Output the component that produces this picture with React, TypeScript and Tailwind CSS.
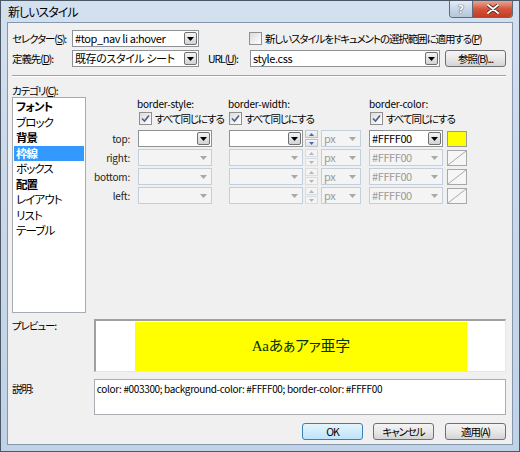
import clsx from 'clsx'

const jp = "font-['Noto_Sans_CJK_JP','Noto_Sans',sans-serif] [font-feature-settings:'palt']"
const t = 'whitespace-nowrap text-[10.5px] tracking-[-1.1px]'
const lat = 'whitespace-nowrap text-[10px] tracking-[-0.2px]'

function Arrow({ disabled }: { disabled?: boolean }) {
  return (
    <svg width="7" height="4" viewBox="0 0 7 4">
      <path d="M0 0h7L3.5 4z" fill={disabled ? '#a8a8a8' : '#000'} />
    </svg>
  )
}

function Combo({
  className,
  value,
  disabled,
}: {
  className: string
  value?: string
  disabled?: boolean
}) {
  return (
    <div
      className={clsx(
        'flex h-[17px] shrink-0 items-center border',
        disabled ? 'border-[#c2cfdf] bg-[#f4f4f4]' : 'border-[#8d9297] bg-white',
        className,
      )}
    >
      <span
        className={clsx(
          'flex-1 truncate pl-[2px] text-[11px] leading-[15px] tracking-[-0.4px]',
          disabled ? 'text-[#9a9a9a]' : 'text-black',
        )}
      >
        {value}
      </span>
      {disabled ? (
        <div className="mr-[1px] flex h-[13px] w-[13px] items-center justify-center">
          <Arrow disabled />
        </div>
      ) : (
        <div className="mr-[1px] flex h-[13px] w-[13px] items-center justify-center rounded-[2px] border border-[#707070] bg-gradient-to-b from-[#f4f4f4] to-[#d3d3d3]">
          <Arrow />
        </div>
      )}
    </div>
  )
}

function Box({ checked }: { checked?: boolean }) {
  return (
    <div className="flex h-[13px] w-[13px] shrink-0 items-center justify-center border border-[#8f8f8f] bg-gradient-to-br from-[#dcdcdc] to-white">
      {checked && (
        <svg width="9" height="9" viewBox="0 0 9 9">
          <path d="M1 4.5 L3.5 7 L8 1.5" stroke="#4a5f8f" strokeWidth="1.6" fill="none" />
        </svg>
      )}
    </div>
  )
}

function Check({ label }: { label: string }) {
  return (
    <div className="flex items-center gap-[3px]">
      <Box checked />
      <span className={clsx(t, 'leading-[13px]')}>{label}</span>
    </div>
  )
}

function Spinner({ disabled }: { disabled?: boolean }) {
  const c = disabled ? '#b4b4b4' : '#4a6bab'
  return (
    <div className="flex h-[17px] w-[13px] shrink-0 flex-col gap-[1px]">
      {[0, 1].map((i) => (
        <div
          key={i}
          className={clsx(
            'flex flex-1 items-center justify-center border',
            disabled
              ? 'border-[#d8dde3] bg-[#f4f4f4]'
              : 'border-[#b9c4d1] bg-gradient-to-b from-[#f6f6f6] to-[#e2e2e2]',
          )}
        >
          <svg width="5" height="3" viewBox="0 0 5 3">
            <path d={i === 0 ? 'M0 3h5L2.5 0z' : 'M0 0h5L2.5 3z'} fill={c} />
          </svg>
        </div>
      ))}
    </div>
  )
}

function Swatch({ filled }: { filled?: boolean }) {
  return filled ? (
    <div className="ml-[4px] h-[16px] w-[20px] shrink-0 border border-[#9a9a9a] bg-[#ffff00]" />
  ) : (
    <div className="ml-[4px] h-[16px] w-[20px] shrink-0 border border-[#a8a8a8] bg-[#f6f6f6]">
      <svg width="18" height="14" viewBox="0 0 18 14" className="block">
        <path d="M0 14 L18 0" stroke="#a8a8a8" strokeWidth="1" />
      </svg>
    </div>
  )
}

function Button({
  label,
  primary,
  className,
}: {
  label: string
  primary?: boolean
  className?: string
}) {
  return (
    <div
      className={clsx(
        'flex h-[17px] w-[61px] shrink-0 items-center justify-center rounded-[3px] border leading-[15px]',
        t,
        primary
          ? 'border-[#3c7fb1] bg-gradient-to-b from-[#e5f4fc] to-[#bde4fa]'
          : 'border-[#707070] bg-gradient-to-b from-[#f4f4f4] via-[#e8e8e8] to-[#d4d4d4]',
        className,
      )}
    >
      {label}
    </div>
  )
}

const CATEGORIES: { name: string; bold?: boolean }[] = [
  { name: 'フォント', bold: true },
  { name: 'ブロック' },
  { name: '背景', bold: true },
  { name: '枠線', bold: true },
  { name: 'ボックス' },
  { name: '配置', bold: true },
  { name: 'レイアウト' },
  { name: 'リスト' },
  { name: 'テーブル' },
]

const SIDES = ['top:', 'right:', 'bottom:', 'left:']

export default function App() {
  return (
    <div
      className={clsx(
        'flex h-[452px] w-[520px] flex-col border border-[#4d5866] bg-gradient-to-b from-[#d3e0ee] via-[#c8d8ea] to-[#c0d2e6] text-black',
        jp,
      )}
    >
      {/* title bar */}
      <div className="flex h-[21px] shrink-0 items-start">
        <span className="ml-[7px] mt-[4px] whitespace-nowrap text-[12px] leading-[14px] tracking-[-1px] text-black">
          新しいスタイル
        </span>
        <div className="ml-auto mr-[6px] flex h-[17px] overflow-hidden rounded-b-[4px] border border-t-0 border-[#5a6a80]">
          <div className="flex w-[23px] items-center justify-center border-r border-[#5a6a80] bg-gradient-to-b from-[#e4ecf5] via-[#c9d7e6] to-[#b4c6da]">
            <span className="font-['DejaVu_Sans',sans-serif] text-[11px] font-bold leading-[13px] text-white [text-shadow:0_0_1px_#445,0_0_1px_#445]">
              ?
            </span>
          </div>
          <div className="flex w-[39px] items-center justify-center bg-gradient-to-b from-[#e8a493] via-[#d5543c] to-[#c43b22]">
            <svg width="12" height="10" viewBox="0 0 12 10">
              <path
                d="M1 1 L11 9 M11 1 L1 9"
                stroke="#3a1b14"
                strokeWidth="3.4"
                strokeLinecap="round"
              />
              <path
                d="M1 1 L11 9 M11 1 L1 9"
                stroke="#fff"
                strokeWidth="2"
                strokeLinecap="round"
              />
            </svg>
          </div>
        </div>
      </div>

      {/* client */}
      <div className="mx-[6px] mb-[6px] flex flex-1 flex-col border border-[#8597ae] bg-[#f0f0f0] pl-[4px] pr-[6px] pt-[7px]">
        <div className="flex h-[17px] items-center">
          <span className={clsx(t, 'w-[60px] leading-[15px]')}>
            セレクター(<u>S</u>):
          </span>
          <Combo className="w-[127px]" value="#top_nav li a:hover" />
          <div className="ml-[50px] flex items-center gap-[3px]">
            <Box />
            <span className={clsx(t, 'leading-[13px]')}>
              新しいスタイルをドキュメントの選択範囲に適用する(<u>P</u>)
            </span>
          </div>
        </div>

        <div className="mt-[3px] flex h-[17px] items-center">
          <span className={clsx(t, 'w-[60px] leading-[15px]')}>
            定義先(<u>D</u>):
          </span>
          <Combo className="w-[127px]" value="既存のスタイル シート" />
          <span className={clsx(t, 'ml-[9px] w-[42px] leading-[15px]')}>
            URL(<u>U</u>):
          </span>
          <Combo className="w-[190px]" value="style.css" />
          <Button className="ml-[5px]" label="参照(B)..." />
        </div>

        <div className="mt-[8px] h-[2px] border-b border-t border-b-white border-t-[#a0a0a0]" />

        <span className={clsx(t, 'mt-[7px] leading-[13px]')}>
          カテゴリ(<u>C</u>):
        </span>

        <div className="flex">
          <div className="h-[216px] w-[74px] shrink-0 border border-[#a5acb5] bg-white px-[1px] pt-[1px]">
            {CATEGORIES.map((c) => (
              <div
                key={c.name}
                className={clsx(
                  'h-[15.5px] pl-[2px] text-[11.5px] leading-[15.5px] tracking-[-0.9px]',
                  c.bold && 'font-bold',
                  c.name === '枠線' && 'bg-[#3399ff] text-white',
                )}
              >
                {c.name}
              </div>
            ))}
          </div>

          <div className="flex flex-col">
            <div className={clsx(lat, 'flex h-[13px] items-center leading-[13px]')}>
              <span className="w-[51px]" />
              <span className="w-[91px]">border-style:</span>
              <span className="w-[141px]">border-width:</span>
              <span>border-color:</span>
            </div>
            <div className="mt-[2px] flex h-[13px] items-center">
              <span className="w-[53px]" />
              <div className="w-[90px]">
                <Check label="すべて同じにする" />
              </div>
              <div className="w-[141px]">
                <Check label="すべて同じにする" />
              </div>
              <Check label="すべて同じにする" />
            </div>

            {SIDES.map((s, i) => {
              const off = i > 0
              return (
                <div
                  key={s}
                  className={clsx('flex h-[17px] items-center', i === 0 ? 'mt-[5px]' : 'mt-[2px]')}
                >
                  <span
                    className={clsx(lat, 'w-[52px] pr-[8px] text-right leading-[15px] text-[#222]')}
                  >
                    {s}
                  </span>
                  <Combo className="w-[74px]" disabled={off} />
                  <Combo className="ml-[17px] w-[74px]" disabled={off} />
                  <div className="ml-[2px]">
                    <Spinner disabled={off} />
                  </div>
                  <Combo className="ml-[3px] w-[40px]" value="px" disabled />
                  <Combo className="ml-[8px] w-[74px]" value="#FFFF00" disabled={off} />
                  <Swatch filled={!off} />
                </div>
              )
            })}
          </div>
        </div>

        <div className="mt-[6px] flex">
          <span className={clsx(t, 'w-[82px] leading-[13px]')}>プレビュー:</span>
          <div className="h-[53px] w-[413px] border-b border-l-2 border-r border-t-2 border-b-[#e6e6e6] border-l-[#a0a0a0] border-r-[#e6e6e6] border-t-[#a0a0a0] bg-white pl-[39px] pt-[1px]">
            <div className="flex h-[49px] w-[332px] items-center justify-center bg-[#ffff00] font-['Liberation_Serif','Noto_Sans_CJK_JP',serif] text-[15px] tracking-[-0.3px] text-[#003300]">
              Aaあぁアァ亜字
            </div>
          </div>
        </div>

        <div className="mt-[7px] flex">
          <span className={clsx(t, 'w-[82px] pt-[3px] leading-[13px]')}>説明:</span>
          <div
            className={clsx(
              'h-[36px] w-[413px] border border-[#abadb3] bg-white px-[2px] pt-[2px] leading-[14px]',
              lat,
              'tracking-[-0.35px]',
            )}
          >
            color: #003300; background-color: #FFFF00; border-color: #FFFF00
          </div>
        </div>

        <div className="mt-[8px] flex justify-end">
          <Button label="OK" primary />
          <Button className="ml-[10px]" label="キャンセル" />
          <Button className="ml-[11px]" label="適用(A)" />
        </div>
      </div>
    </div>
  )
}
